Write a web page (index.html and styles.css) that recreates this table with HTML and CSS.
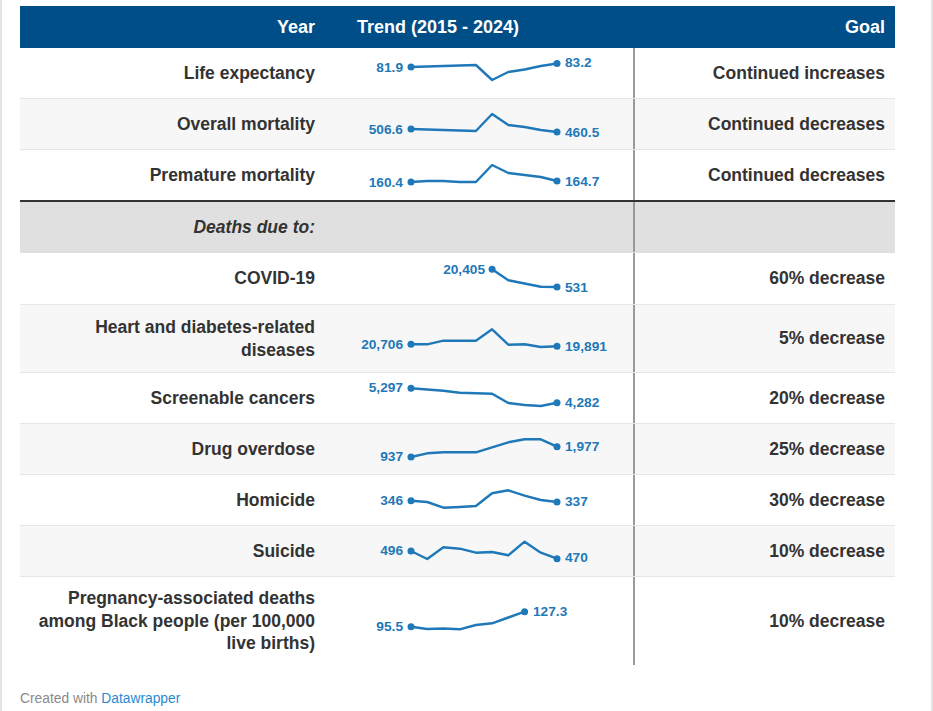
FILE: index.html
```html
<!DOCTYPE html>
<html lang="en">
<head>
<meta charset="utf-8">
<title>Goals table</title>
<link rel="stylesheet" href="styles.css">
</head>
<body>
<div class="frame">
  <div class="table">
    <div class="row head">
      <div class="c1">Year</div>
      <div class="c2">Trend (2015 - 2024)</div>
      <div class="c3">Goal</div>
    </div>

    <div class="row">
      <div class="c1">Life expectancy</div>
      <div class="c2">
        <svg width="308" height="50" viewBox="0 0 308 50">
          <polyline class="ln" points="86,19 102.2,18.5 118.4,18 134.7,17.5 150.9,17 167.1,32 183.3,24 199.6,21.5 215.8,18 232,15.5"/>
          <circle class="dt" cx="86" cy="19" r="3.5"/><circle class="dt" cx="232" cy="15.5" r="3.5"/>
          <text class="lbl" x="78" y="19" text-anchor="end">81.9</text>
          <text class="lbl" x="240" y="14.5">83.2</text>
        </svg>
      </div>
      <div class="c3">Continued increases</div>
    </div>

    <div class="row alt">
      <div class="c1">Overall mortality</div>
      <div class="c2">
        <svg width="308" height="50" viewBox="0 0 308 50">
          <polyline class="ln" points="86,30 102.2,30.5 118.4,31 134.7,31.5 150.9,32 167.1,15 183.3,26 199.6,28 215.8,31 232,33"/>
          <circle class="dt" cx="86" cy="30" r="3.5"/><circle class="dt" cx="232" cy="33" r="3.5"/>
          <text class="lbl" x="78" y="30" text-anchor="end">506.6</text>
          <text class="lbl" x="240" y="33">460.5</text>
        </svg>
      </div>
      <div class="c3">Continued decreases</div>
    </div>

    <div class="row sep">
      <div class="c1">Premature mortality</div>
      <div class="c2">
        <svg width="308" height="50" viewBox="0 0 308 50">
          <polyline class="ln" points="86,32 102.2,31 118.4,31 134.7,32 150.9,32 167.1,15 183.3,23 199.6,25 215.8,27 232,31"/>
          <circle class="dt" cx="86" cy="32" r="3.5"/><circle class="dt" cx="232" cy="31" r="3.5"/>
          <text class="lbl" x="78" y="32" text-anchor="end">160.4</text>
          <text class="lbl" x="240" y="31">164.7</text>
        </svg>
      </div>
      <div class="c3">Continued decreases</div>
    </div>

    <div class="row group">
      <div class="c1 ital">Deaths due to:</div>
      <div class="c2 blank"></div>
      <div class="c3"></div>
    </div>

    <div class="row">
      <div class="c1">COVID-19</div>
      <div class="c2">
        <svg width="308" height="51" viewBox="0 0 308 51">
          <polyline class="ln" points="167.1,16.3 183.3,27.3 199.6,30.5 215.8,33.7 232,34"/>
          <circle class="dt" cx="167.1" cy="16.3" r="3.5"/><circle class="dt" cx="232" cy="34" r="3.5"/>
          <text class="lbl" x="160" y="16.3" text-anchor="end">20,405</text>
          <text class="lbl" x="240" y="34">531</text>
        </svg>
      </div>
      <div class="c3">60% decrease</div>
    </div>

    <div class="row alt">
      <div class="c1">Heart and diabetes-related diseases</div>
      <div class="c2">
        <svg width="308" height="67" viewBox="0 0 308 67">
          <polyline class="ln" points="86,39.3 102.2,39.3 118.4,35.7 134.7,35.7 150.9,35.7 167.1,24.3 183.3,39.7 199.6,39.3 215.8,42 232,41.3"/>
          <circle class="dt" cx="86" cy="39.3" r="3.5"/><circle class="dt" cx="232" cy="41.3" r="3.5"/>
          <text class="lbl" x="78" y="39.3" text-anchor="end">20,706</text>
          <text class="lbl" x="240" y="41.3">19,891</text>
        </svg>
      </div>
      <div class="c3">5% decrease</div>
    </div>

    <div class="row">
      <div class="c1">Screenable cancers</div>
      <div class="c2">
        <svg width="308" height="50" viewBox="0 0 308 50">
          <polyline class="ln" points="86,15.3 102.2,16.5 118.4,17.7 134.7,19.7 150.9,20.3 167.1,20.7 183.3,30 199.6,32 215.8,33 232,29.7"/>
          <circle class="dt" cx="86" cy="15.3" r="3.5"/><circle class="dt" cx="232" cy="29.7" r="3.5"/>
          <text class="lbl" x="78" y="14.5" text-anchor="end">5,297</text>
          <text class="lbl" x="240" y="29.7">4,282</text>
        </svg>
      </div>
      <div class="c3">20% decrease</div>
    </div>

    <div class="row alt">
      <div class="c1">Drug overdose</div>
      <div class="c2">
        <svg width="308" height="50" viewBox="0 0 308 50">
          <polyline class="ln" points="86,33 102.2,29.3 118.4,28.3 134.7,28.3 150.9,28.3 167.1,23.3 183.3,18.3 199.6,15.3 215.8,15.3 232,22.7"/>
          <circle class="dt" cx="86" cy="33" r="3.5"/><circle class="dt" cx="232" cy="22.7" r="3.5"/>
          <text class="lbl" x="78" y="32.5" text-anchor="end">937</text>
          <text class="lbl" x="240" y="22.3">1,977</text>
        </svg>
      </div>
      <div class="c3">25% decrease</div>
    </div>

    <div class="row">
      <div class="c1">Homicide</div>
      <div class="c2">
        <svg width="308" height="50" viewBox="0 0 308 50">
          <polyline class="ln" points="86,25.7 102.2,27 118.4,32.7 134.7,32 150.9,31 167.1,18.3 183.3,15.3 199.6,20.7 215.8,25 232,27"/>
          <circle class="dt" cx="86" cy="25.7" r="3.5"/><circle class="dt" cx="232" cy="27" r="3.5"/>
          <text class="lbl" x="78" y="25.3" text-anchor="end">346</text>
          <text class="lbl" x="240" y="26.3">337</text>
        </svg>
      </div>
      <div class="c3">30% decrease</div>
    </div>

    <div class="row alt">
      <div class="c1">Suicide</div>
      <div class="c2">
        <svg width="308" height="50" viewBox="0 0 308 50">
          <polyline class="ln" points="86,25 102.2,33 118.4,21.3 134.7,22.7 150.9,26.7 167.1,26 183.3,29.3 199.6,15.7 215.8,26.7 232,32.7"/>
          <circle class="dt" cx="86" cy="25" r="3.5"/><circle class="dt" cx="232" cy="32.7" r="3.5"/>
          <text class="lbl" x="78" y="24.5" text-anchor="end">496</text>
          <text class="lbl" x="240" y="31.5">470</text>
        </svg>
      </div>
      <div class="c3">10% decrease</div>
    </div>

    <div class="row last">
      <div class="c1">Pregnancy-associated deaths among Black people (per 100,000 live births)</div>
      <div class="c2">
        <svg width="308" height="88" viewBox="0 0 308 88">
          <polyline class="ln" points="86,49.7 102.2,52 118.4,51.5 134.7,52.3 150.9,48 167.1,46.3 183.3,40.5 199.6,34.7"/>
          <circle class="dt" cx="86" cy="49.7" r="3.5"/><circle class="dt" cx="199.6" cy="34.7" r="3.5"/>
          <text class="lbl" x="78" y="49.5" text-anchor="end">95.5</text>
          <text class="lbl" x="208" y="34">127.3</text>
        </svg>
      </div>
      <div class="c3">10% decrease</div>
    </div>
  </div>

  <div class="footer">Created with <a class="brand" href="#">Datawrapper</a></div>
</div>
</body>
</html>
```

FILE: styles.css
```css
html, body {
  margin: 0;
  padding: 0;
  background: #ffffff;
}

.frame {
  width: 911px;
  height: 705px;
  padding: 6px 0 0 18px;
  border-left: 2px solid #e3e3e3;
  border-right: 2px solid #e3e3e3;
  font-family: "Liberation Sans", Arial, sans-serif;
  color: #333333;
}

.table {
  width: 875px;
}

.row {
  display: grid;
  grid-template-columns: 305px 308px 262px;
  min-height: 50px;
  border-bottom: 1px solid #e6e6e6;
  background: #ffffff;
  font-size: 17.5px;
  font-weight: bold;
  line-height: 22.5px;
}

.row.alt {
  background: #f7f7f7;
}

.row.sep {
  border-bottom: 2px solid #333333;
}

.row.group {
  background: #e0e0e0;
  border-bottom: 1px solid #e0e0e0;
}

.row.last {
  border-bottom: none;
}

.c1 {
  display: flex;
  align-items: center;
  justify-content: flex-end;
  text-align: right;
  padding: 10px 10px 10px 4px;
}

.c2 {
  display: flex;
  align-items: center;
}

.c2 svg {
  display: block;
}

.c3 {
  display: flex;
  align-items: center;
  justify-content: flex-end;
  text-align: right;
  padding: 0 10px;
  border-left: 2px solid #9a9a9a;
}

.ital {
  font-style: italic;
}

.row.head {
  min-height: 42px;
  background: #004e87;
  color: #ffffff;
  font-size: 18px;
  border-bottom: none;
}

.row.head .c1 {
  padding: 0 10px;
}

.row.head .c2 {
  padding-left: 32px;
}

.row.head .c3 {
  border-left: none;
}

.ln {
  fill: none;
  stroke: #1f78b8;
  stroke-width: 2.4;
  stroke-linejoin: round;
  stroke-linecap: round;
}

.dt {
  fill: #1f78b8;
}

.lbl {
  font-family: "Liberation Sans", Arial, sans-serif;
  font-size: 13.7px;
  font-weight: bold;
  fill: #1f78b8;
  dominant-baseline: central;
}

.footer {
  margin-top: 26px;
  font-size: 13.8px;
  line-height: 16px;
  color: #8a8a8a;
}

.brand {
  color: #2a8ad0;
  text-decoration: none;
}
```
